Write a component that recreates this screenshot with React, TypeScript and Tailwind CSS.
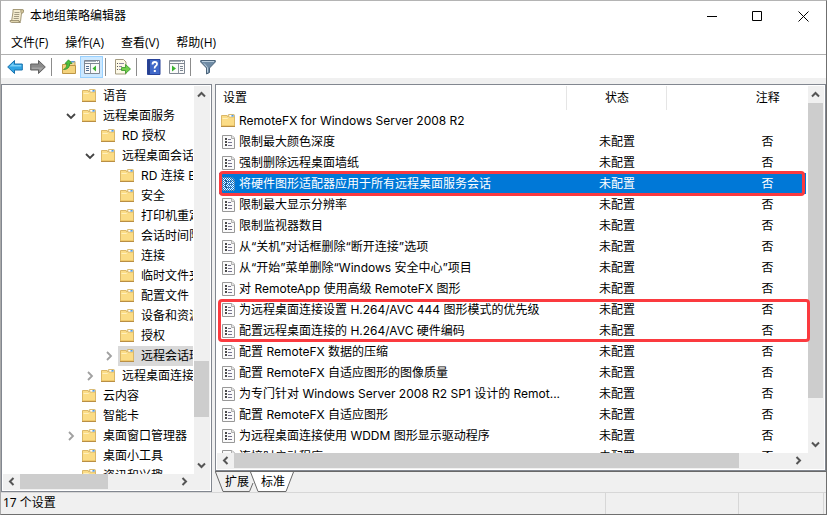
import React, { useState } from 'react';

type Expand = 'open' | 'closed' | null;

interface TreeNode {
  label: string;
  level: 0 | 1 | 2;
  expand: Expand;
}

const TREE: TreeNode[] = [
  { label: '语音', level: 0, expand: null },
  { label: '远程桌面服务', level: 0, expand: 'open' },
  { label: 'RD 授权', level: 1, expand: null },
  { label: '远程桌面会话主机', level: 1, expand: 'open' },
  { label: 'RD 连接 Broker', level: 2, expand: null },
  { label: '安全', level: 2, expand: null },
  { label: '打印机重定向', level: 2, expand: null },
  { label: '会话时间限制', level: 2, expand: null },
  { label: '连接', level: 2, expand: null },
  { label: '临时文件夹', level: 2, expand: null },
  { label: '配置文件', level: 2, expand: null },
  { label: '设备和资源重定向', level: 2, expand: null },
  { label: '授权', level: 2, expand: null },
  { label: '远程会话环境', level: 2, expand: 'closed' },
  { label: '远程桌面连接客户端', level: 1, expand: 'closed' },
  { label: '云内容', level: 0, expand: null },
  { label: '智能卡', level: 0, expand: null },
  { label: '桌面窗口管理器', level: 0, expand: 'closed' },
  { label: '桌面小工具', level: 0, expand: null },
  { label: '资讯和兴趣', level: 0, expand: null },
];

const SETTINGS = [
  '限制最大颜色深度',
  '强制删除远程桌面墙纸',
  '将硬件图形适配器应用于所有远程桌面服务会话',
  '限制最大显示分辨率',
  '限制监视器数目',
  '从“关机”对话框删除“断开连接”选项',
  '从“开始”菜单删除“Windows 安全中心”项目',
  '对 RemoteApp 使用高级 RemoteFX 图形',
  '为远程桌面连接设置 H.264/AVC 444 图形模式的优先级',
  '配置远程桌面连接的 H.264/AVC 硬件编码',
  '配置 RemoteFX 数据的压缩',
  '配置 RemoteFX 自适应图形的图像质量',
  '为专门针对 Windows Server 2008 R2 SP1 设计的 Remot...',
  '配置 RemoteFX 自适应图形',
  '为远程桌面连接使用 WDDM 图形显示驱动程序',
  '连接时启动程序',
];

const MENUS = ['文件(F)', '操作(A)', '查看(V)', '帮助(H)'];

const INDENT = { 0: 'pl-[63px]', 1: 'pl-[82px]', 2: 'pl-[101px]' };

const FolderIcon = () => (
  <svg width="16" height="16" viewBox="0 0 16 16" className="shrink-0">
    <path d="M8 4.500V2.500q0-1 1-1h4.500q1 0 1 1v3H8z" fill="#efd28a" stroke="#cfae62" strokeWidth="0.8" />
    <path d="M9.500 2.300h4v1.400h-4z" fill="#fff" />
    <path d="M11 2.300h2.500v1.400H11z" fill="#4b9be8" />
    <path d="M1.500 13.500v-11h5.500l1 1.500h6.500v9.500z" fill="#fbdc86" stroke="#dab768" />
    <path d="M9.500 2h4v1.500h-4z" fill="#fff" />
    <path d="M11.500 2h2v1.500h-2z" fill="#4b9be8" />
    <path d="M2.500 5.500h5l1-1" fill="none" stroke="#fff0bd" />
    <path d="M2 12.500h12" stroke="#f0c96b" />
    <path d="M1 13.500h14" stroke="#b98f45" />
  </svg>
);

const SettingIcon = ({ selected }: { selected: boolean }) => (
  <svg width="14" height="16" viewBox="0 0 14 16" className="shrink-0">
    <defs>
      <pattern id="dither" width="2" height="2" patternUnits="userSpaceOnUse">
        <path d="M0 0h1v1H0zM1 1h1v1H1z" fill="#0078d7" />
      </pattern>
    </defs>
    <path d="M0.500 1.500h9.500l2.500 2.500v10.500H0.500z" fill="#fafafa" stroke="#989898" />
    <path d="M9.500 1.500v3h3" fill="#e4e4e4" stroke="#b0b0b0" />
    <path d="M3 4h2v2H3zM3 7h2v2H3zM3 10h2v2H3z" fill="#4a4a4a" />
    <path d="M6 5.500h3M6 8.500h4M6 11.500h4" stroke="#77758f" />
    {selected && <path d="M0 0h14v16H0z" fill="url(#dither)" />}
  </svg>
);

const ScrollIcon = () => (
  <svg width="16" height="16" viewBox="0 0 16 16">
    <path d="M4 1.500h9q2 0 1.500 2t-2 1.500l-1 8.500H2.500L4 4z" fill="#f3ebcf" stroke="#a59a78" />
    <path d="M12 4.500q-1-3 1-3t1.500 2-2 1.500z" fill="#d7c99d" stroke="#9b9070" strokeWidth="0.8" />
    <path d="M1 12.500h9q-.5 2 1.500 2H2.500q-1.500 0-1.500-2z" fill="#dfd3ac" stroke="#8f8465" strokeWidth="0.8" />
    <path d="M5.500 4.500h5M5.300 6.500h5M5 8.500h5M4.700 10.500h5" stroke="#9a927b" strokeWidth="0.9" />
  </svg>
);

const ArrowIcon = ({ forward = false }: { forward?: boolean }) => (
  <svg width="16" height="16" viewBox="0 0 16 16" className={forward ? 'rotate-180' : ''}>
    <path
      d="M0.700 8 7.500 1.500v3.500h7.800v6H7.500v3.500z"
      fill={forward ? '#8b8b8b' : '#31a5e4'}
      stroke={forward ? '#626262' : '#1b72ad'}
      strokeLinejoin="round"
    />
    <path d="M2.500 7.500 6.500 3.800V6h7.800v1.500z" fill={forward ? '#a5a5a5' : '#7bd0f7'} />
  </svg>
);

const UpFolderIcon = () => (
  <svg width="16" height="16" viewBox="0 0 16 16">
    <path d="M8.500 4V2.500h5.500v4h-5.500z" fill="#f2d995" stroke="#c7a04f" />
    <path d="M10 2h3.500v1.500H10z" fill="#5c9fdc" />
    <path d="M1.500 14.500V5.500h5l1.500 1h6.500v8z" fill="#f4d37d" stroke="#bd9647" />
    <path d="M2.500 10.500q3.500-1 3.500-6H4l3.500-3.700L11 4.500H8.800q-.3 6-6.300 6z" fill="#4cc03d" stroke="#228a24" strokeWidth="0.7" />
  </svg>
);

const PaneIcon = ({ right = false }: { right?: boolean }) => (
  <svg width="16" height="14" viewBox="0 0 16 14">
    <path d="M0.500 0.500h15v13H0.500z" fill="#fafafa" stroke="#7f8792" />
    <path d="M1 1h14v1H1z" fill="#a6afbb" />
    <path d="M1 3.500h14" stroke="#7f8792" />
    <path d="M12 1h1v1h-1zM14 1h1v1h-1z" fill="#fff" />
    {right ? (
      <>
        <path d="M9.500 4v9.500" stroke="#8d95a0" />
        <path d="M11 6.500h3M11 8.500h3M11 10.500h3" stroke="#7a8591" />
        <path d="M3 5.500 7 8.500l-4 3z" fill="#39b22f" />
      </>
    ) : (
      <>
        <path d="M6.500 4v9.500" stroke="#8d95a0" />
        <path d="M2 6.500h3M2 8.500h3M2 10.500h3" stroke="#536f91" />
        <path d="M12 5.500 8.500 8.500l3.500 3z" fill="#39b22f" />
      </>
    )}
  </svg>
);

const ExportIcon = () => (
  <svg width="17" height="16" viewBox="0 0 17 16">
    <path d="M1.500 0.500h8l2.500 2.500v12H1.500z" fill="#fdf9e6" stroke="#a39b80" />
    <path d="M3 4h1v1H3zM3 7h1v1H3zM3 10h1v1H3z" fill="#555" />
    <path d="M5 4.500h5M5 7.500h3M5 10.500h3" stroke="#8c8aa0" />
    <path d="M7.500 8.500h4v-3l5 4.500-5 4.500v-3h-4z" fill="#71cf4b" stroke="#35962a" strokeWidth="0.8" />
  </svg>
);

const HelpIcon = () => (
  <svg width="14" height="16" viewBox="0 0 14 16">
    <path d="M0.500 0.500h12.500v15H0.500z" fill="#4068c8" stroke="#28439a" />
    <path d="M1 1h2v14H1z" fill="#27408f" />
    <path d="M5.500 5.500q0-2.500 2.300-2.500t2.200 2q0 1.200-1.300 2t-1 2.500" fill="none" stroke="#fff" strokeWidth="1.800" />
    <path d="M6.800 11h2v2h-2z" fill="#fff" />
  </svg>
);

const FilterIcon = () => (
  <svg width="16" height="16" viewBox="0 0 16 16">
    <path d="M0.700 1.500h14.600v1.500L9.500 9v4.500l-3 1.500V9L0.700 3z" fill="#6f8ba5" stroke="#4b6379" strokeLinejoin="round" />
    <path d="M2 2.500h12" stroke="#b9cddd" />
    <path d="M4 4.500 7.500 8.500v5" fill="none" stroke="#b9cddd" />
  </svg>
);

const TOOLS = [
  { label: '后退', icon: <ArrowIcon /> },
  { label: '前进', icon: <ArrowIcon forward />, divider: true },
  { label: '上移一级', icon: <UpFolderIcon /> },
  { label: '显示/隐藏控制台树', icon: <PaneIcon />, active: true, divider: true },
  { label: '导出列表', icon: <ExportIcon />, divider: true },
  { label: '帮助', icon: <HelpIcon /> },
  { label: '显示/隐藏操作窗格', icon: <PaneIcon right />, divider: true },
  { label: '筛选器', icon: <FilterIcon /> },
];

const ScrollArrow = ({ dir }: { dir: 'up' | 'down' | 'left' | 'right' }) => {
  const paths = {
    up: 'M1 6.500 4.500 3 8 6.500',
    down: 'M1 2.500 4.500 6 8 2.500',
    left: 'M6.500 1 3 4.500 6.500 8',
    right: 'M2.500 1 6 4.500 2.500 8',
  };
  const labels = { up: '向上滚动', down: '向下滚动', left: '向左滚动', right: '向右滚动' };
  const vertical = dir === 'up' || dir === 'down';
  return (
    <button
      type="button"
      aria-label={labels[dir]}
      className={`flex shrink-0 items-center justify-center ${vertical ? 'h-[17px] w-[15px]' : 'h-[15px] w-[17px]'}`}
    >
      <svg width="9" height="9" viewBox="0 0 9 9">
        <path d={paths[dir]} fill="none" stroke="#555" strokeWidth="2" />
      </svg>
    </button>
  );
};

const Chevron = ({ state }: { state: Expand }) => (
  <svg width="10" height="10" viewBox="0 0 10 10" className="shrink-0">
    {state === 'open' && <path d="M1 3 5 7l4-4" fill="none" stroke="#444" strokeWidth="1.800" />}
    {state === 'closed' && <path d="M3 1l4 4-4 4" fill="none" stroke="#a0a0a0" strokeWidth="1.800" />}
  </svg>
);

const TreePane = () => {
  const [current, setCurrent] = useState('远程会话环境');
  return (
    <div className="flex w-[211px] shrink-0 flex-col border border-[#828790] bg-white p-px">
      <div className="flex min-h-0 flex-1">
        <ul className="mr-px min-w-0 flex-1 overflow-hidden">
          {TREE.map((node) => (
            <li key={node.label} className={`flex h-5 items-center ${INDENT[node.level]}`}>
              <Chevron state={node.expand} />
              <button
                type="button"
                onClick={() => setCurrent(node.label)}
                className={`ml-1 flex h-5 flex-1 items-center gap-1.5 overflow-hidden pl-px whitespace-nowrap ${
                  node.label === current ? 'bg-[#d9d9d9]' : ''
                }`}
              >
                <FolderIcon />
                {node.label}
              </button>
            </li>
          ))}
        </ul>
        <div className="flex w-4 shrink-0 flex-col bg-[#f0f0f0]">
          <ScrollArrow dir="up" />
          <div className="flex min-h-0 flex-1 flex-col">
            <div className="flex-[258]" />
            <div className="mr-px flex-[56] bg-[#cdcdcd]" />
            <div className="flex-[40]" />
          </div>
          <ScrollArrow dir="down" />
        </div>
      </div>
      <div className="flex h-4 shrink-0 bg-[#f0f0f0] pr-[17px]">
        <ScrollArrow dir="left" />
        <div className="mb-px w-[88px] bg-[#cdcdcd]" />
        <div className="flex-1" />
        <ScrollArrow dir="right" />
      </div>
    </div>
  );
};

const SettingsTable = () => {
  const [selected, setSelected] = useState(2);
  return (
    <div className="relative mr-0.5 min-w-0 flex-1 overflow-hidden">
      <table className="ml-0.5 w-[648px] table-fixed border-collapse">
        <thead>
          <tr className="h-6">
            <th className="w-[347px] border-r border-[#e5e5e5] p-0 pl-1 text-left font-normal">设置</th>
            <th className="w-[100px] border-r border-[#e5e5e5] p-0 pl-0.5 text-center font-normal">状态</th>
            <th className="p-0 pl-0.5 text-center font-normal">注释</th>
          </tr>
        </thead>
        <tbody>
          <tr className="h-[21px]">
            <td className="p-0 pl-px" colSpan={3}>
              <span className="flex items-center gap-[3px]">
                <FolderIcon />
                RemoteFX for Windows Server 2008 R2
              </span>
            </td>
          </tr>
          {SETTINGS.map((name, i) => (
            <tr
              key={name}
              onClick={() => setSelected(i)}
              className={`h-[21px] ${i === selected ? 'bg-[#0078d7] text-white' : ''}`}
            >
              <td className="p-0 pl-[3px]">
                <span className="flex items-center gap-[3px] whitespace-nowrap">
                  <SettingIcon selected={i === selected} />
                  {name}
                </span>
              </td>
              <td className="p-0 pl-0.5 text-center">未配置</td>
              <td className="p-0 pl-0.5 text-center">否</td>
            </tr>
          ))}
        </tbody>
      </table>
      {/* highlight frames over the rows */}
      <div className="pointer-events-none absolute top-[85px] right-px left-0.5 h-[25px] rounded-sm border-3 border-[#fb3a3f]" />
    </div>
  );
};

const TabStrip = () => (
  <div className="flex h-[21px] border-t border-[#696969]">
    <button type="button" className="relative h-5 w-[42px] pl-0.5">
      <svg width="42" height="20" viewBox="0 0 42 20" className="absolute top-0 left-0">
        <path d="M0.500 0 8 19.500h26.500L38 11" fill="none" stroke="#696969" />
      </svg>
      <span className="relative">扩展</span>
    </button>
    <button type="button" className="relative -ml-[7px] h-5 w-11 pl-0.5">
      <svg width="44" height="20" viewBox="0 0 44 20" className="absolute top-0 left-0">
        <path d="M0.500 0 8 19.500h28L43.500 0" fill="#fff" stroke="#696969" />
      </svg>
      <span className="relative">标准</span>
    </button>
  </div>
);

const DetailPane = () => (
  <div className="flex min-w-0 flex-1 flex-col">
    <div className="relative flex min-h-0 flex-1 flex-col border border-[#828790] bg-white p-px">
      <div className="flex min-h-0 flex-1">
        <SettingsTable />
        <div className="flex w-4 shrink-0 flex-col bg-[#f0f0f0]">
          <ScrollArrow dir="up" />
          <div className="flex min-h-0 flex-1 flex-col">
            <div className="mr-px flex-[295] bg-[#cdcdcd]" />
            <div className="flex-[38]" />
          </div>
          <ScrollArrow dir="down" />
        </div>
      </div>
      <div className="flex h-4 shrink-0 bg-[#f0f0f0] pr-[17px]">
        <ScrollArrow dir="left" />
        <div className="flex min-w-0 flex-1">
          <div className="mb-px flex-[505] bg-[#cdcdcd]" />
          <div className="flex-[51]" />
        </div>
        <ScrollArrow dir="right" />
      </div>
      <div className="pointer-events-none absolute top-[214px] right-[15px] left-0.5 h-[43px] rounded-sm border-3 border-[#fb3a3f]" />
    </div>
    <TabStrip />
  </div>
);

export default function App() {
  return (
    <div className="flex h-screen flex-col overflow-hidden border border-t-[#b4b4b4] border-r-[#6f6f6f] border-b-[#6f6f6f] border-l-[#aaaaaa] bg-[#f0f0f0] font-['Inter','Noto_Sans_CJK_SC',sans-serif] text-xs leading-5 text-black">
      <header className="flex h-[30px] shrink-0 items-center bg-white pl-2">
        <ScrollIcon />
        <h1 className="ml-[5px] flex-1">本地组策略编辑器</h1>
        <button type="button" aria-label="最小化" className="flex h-full w-[46px] items-center justify-center">
          <svg width="11" height="11" viewBox="0 0 11 11"><path d="M0 5.500h10" stroke="#000" /></svg>
        </button>
        <button type="button" aria-label="最大化" className="flex h-full w-[45px] items-center justify-center">
          <svg width="11" height="11" viewBox="0 0 11 11"><path d="M0.500 0.500h9v9h-9z" fill="none" stroke="#000" /></svg>
        </button>
        <button type="button" aria-label="关闭" className="flex h-full w-[46px] items-center justify-center">
          <svg width="11" height="11" viewBox="0 0 11 11"><path d="M0.500 0.500l10 10M10.500 0.500l-10 10" stroke="#000" /></svg>
        </button>
      </header>

      <nav className="flex h-6 shrink-0 items-center gap-[17px] border-b border-[#b0b0b0] bg-white pl-2.5 font-['Open_Sans','Noto_Sans_CJK_SC',sans-serif]">
        {MENUS.map((m) => (
          <button key={m} type="button">{m}</button>
        ))}
      </nav>

      <div className="flex h-[23px] shrink-0 items-center bg-white pl-0.5">
        {TOOLS.map((tool) => (
          <React.Fragment key={tool.label}>
            <button
              type="button"
              aria-label={tool.label}
              className={`flex h-[22px] w-[23px] items-center justify-center ${
                tool.active ? 'border border-[#99d1ff] bg-[#cce8ff]' : ''
              }`}
            >
              {tool.icon}
            </button>
            {tool.divider && <div className="mr-[5px] ml-0.5 h-[18px] w-px bg-[#8c8c8c]" />}
          </React.Fragment>
        ))}
      </div>

      <main className="flex min-h-0 flex-1 gap-[3px] pt-1.5">
        <TreePane />
        <DetailPane />
      </main>

      <footer className="flex h-[22px] shrink-0 border-t border-[#d7d7d7] pr-0.5 font-['Noto_Sans','Noto_Sans_CJK_SC',sans-serif]">
        <div className="flex-1 border-r border-[#d7d7d7] pl-0.5">17 个设置</div>
        <div className="w-[133px] border-r border-[#d7d7d7]" />
        <div className="w-[85px] border-r border-[#d7d7d7]" />
      </footer>
    </div>
  );
}
